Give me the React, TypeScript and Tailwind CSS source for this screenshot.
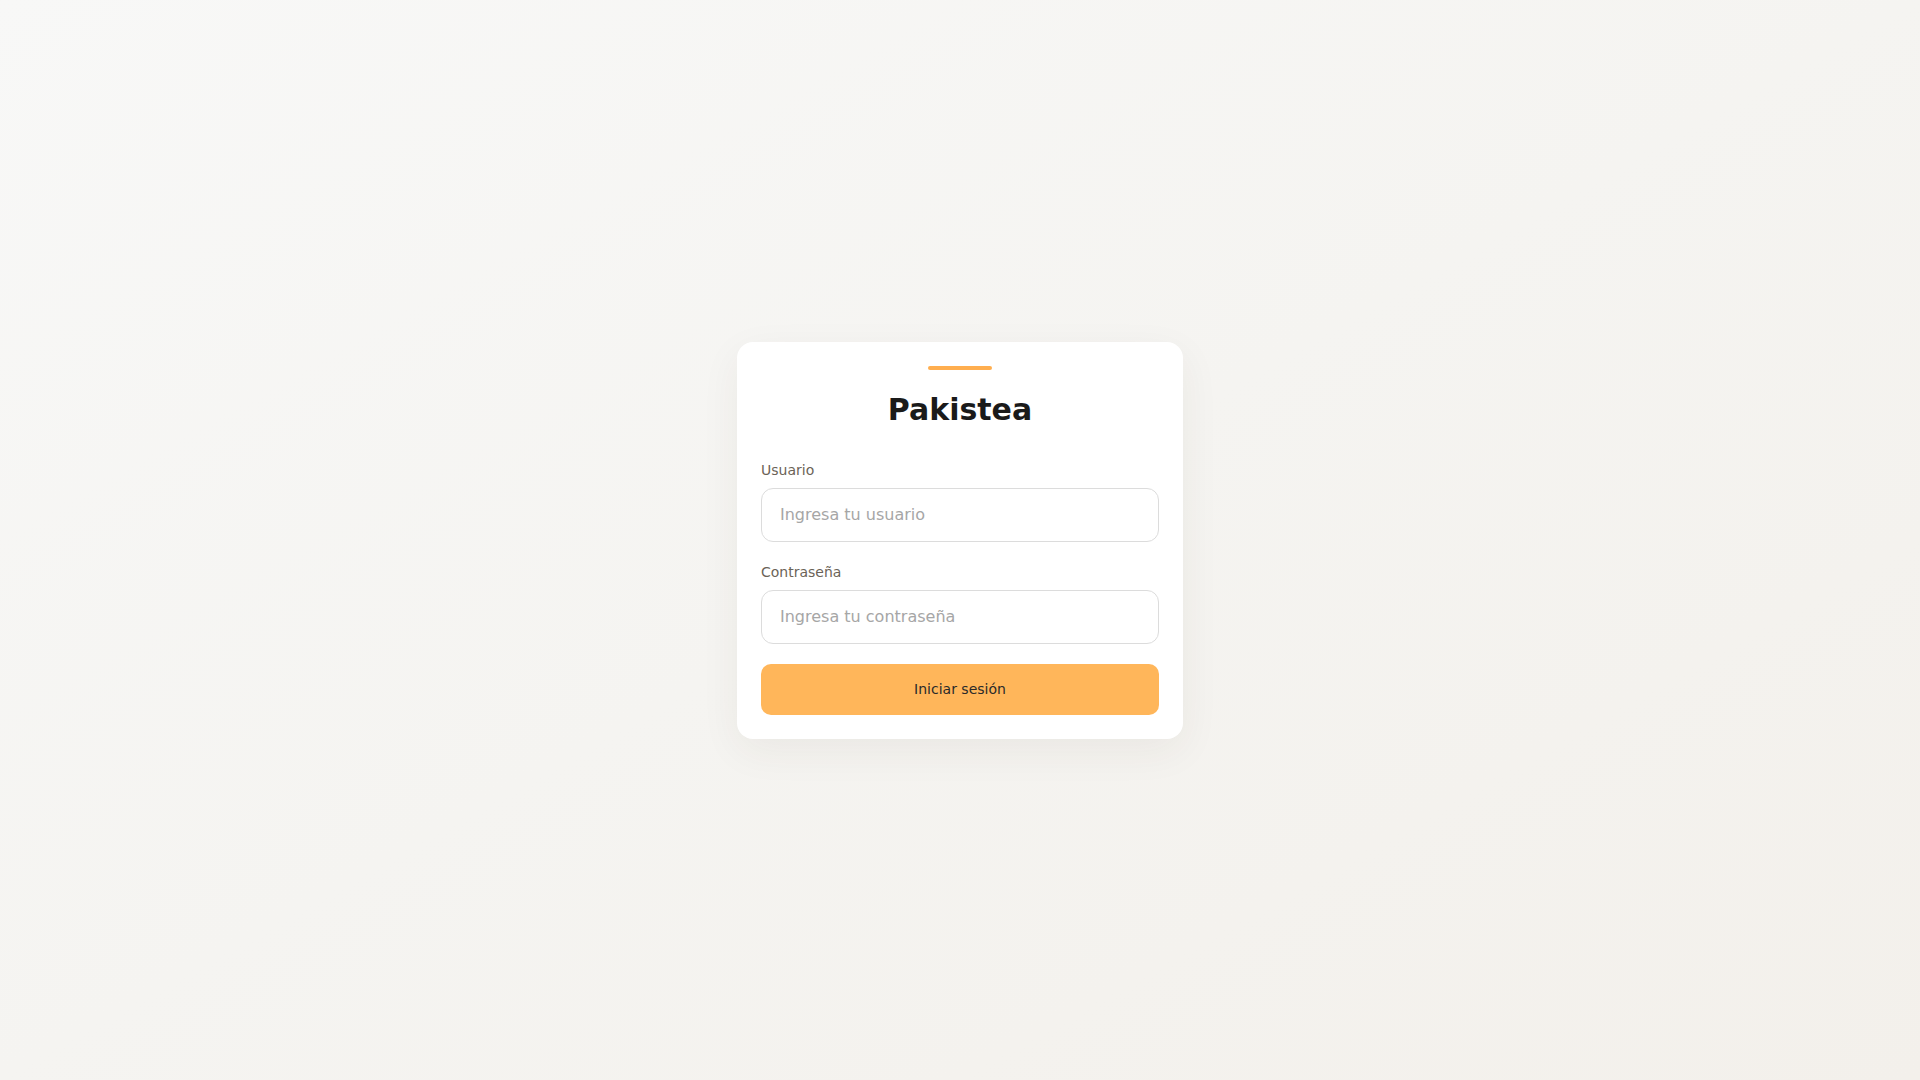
export default function App() {
  return (
    <div className="min-h-screen w-full flex items-center justify-center bg-gradient-to-br from-[#f8f8f7] via-[#f5f4f1] to-[#f3f0eb] font-['DejaVu_Sans',sans-serif]">
      <div className="w-[446px] bg-white rounded-2xl p-6 shadow-[0_12px_40px_rgba(60,50,30,0.06)]">
        <div className="flex justify-center">
          <div className="w-16 h-1 rounded-full bg-[#ffae4f]" />
        </div>
        <h1 className="mt-[22px] text-center text-3xl font-bold text-[#1a1a1a]">Pakistea</h1>
        <form className="mt-8 flex flex-col gap-5" onSubmit={(e) => e.preventDefault()}>
          <div>
            <label className="block mb-2 text-sm text-[#6b6357]">Usuario</label>
            <input
              type="text"
              placeholder="Ingresa tu usuario"
              className="w-full h-[54px] px-[18px] rounded-xl border border-[#dcdcdc] bg-white text-base text-[#1a1a1a] placeholder:text-[#a6a6a6] outline-none"
            />
          </div>
          <div>
            <label className="block mb-2 text-sm text-[#6b6357]">Contraseña</label>
            <input
              type="password"
              placeholder="Ingresa tu contraseña"
              className="w-full h-[54px] px-[18px] rounded-xl border border-[#dcdcdc] bg-white text-base text-[#1a1a1a] placeholder:text-[#a6a6a6] outline-none"
            />
          </div>
          <button
            type="submit"
            className="w-full h-[51px] rounded-[10px] bg-[#ffb65a] text-sm text-[#2a2a2a]"
          >
            Iniciar sesión
          </button>
        </form>
      </div>
    </div>
  );
}
